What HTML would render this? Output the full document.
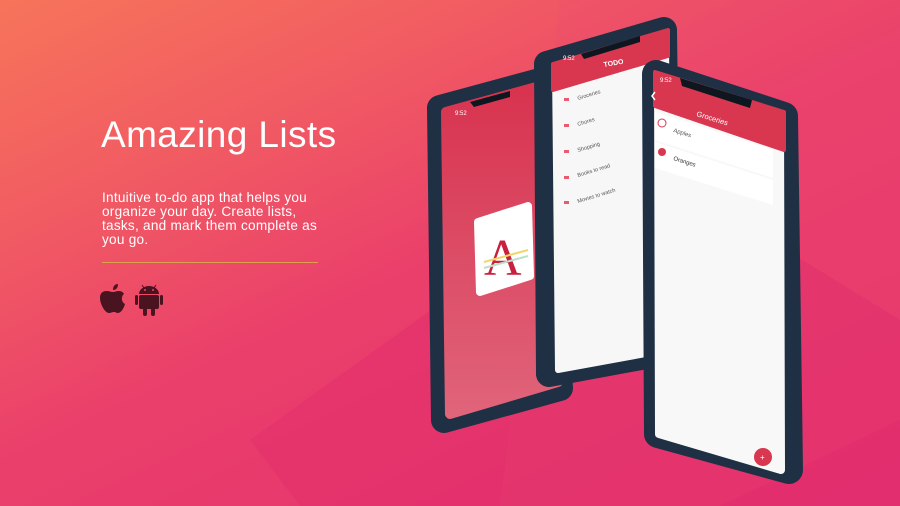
<!DOCTYPE html>
<html><head><meta charset="utf-8"><style>
html,body{margin:0;padding:0}
body{width:900px;height:506px;overflow:hidden;position:relative;font-family:"Liberation Sans",sans-serif;
background:linear-gradient(155deg,#f7745a 0%,#f15c62 25%,#ea3f6b 50%,#e4306f 100%);}
.t{position:absolute;left:101px;top:114px;color:#fff;font-size:37px;letter-spacing:0.4px;}
.p{position:absolute;left:102px;top:191px;width:232px;color:#fff;font-size:13.6px;line-height:14px;letter-spacing:0.25px;}
.hr{position:absolute;left:102px;top:262px;width:216px;height:1px;background:#dfa04e}
</style></head><body>
<svg width="900" height="506" style="position:absolute;left:0;top:0">
<polygon points="560,0 900,0 900,420 720,506 560,506 500,506" fill="#ec4a6f" opacity="0.25"/>
<polygon points="250,440 640,160 900,320 900,506 300,506" fill="#e0276c" opacity="0.35"/>
</svg>
<div class="t">Amazing Lists</div>
<div class="p">Intuitive to-do app that helps you organize your day. Create lists, tasks, and mark them complete as you go.</div>
<div class="hr"></div>
<svg width="64" height="36" style="position:absolute;left:99px;top:282px" viewBox="0 0 64 36">
<path d="M14 10c2 0 3-1 6-1 2 0 4 1 5 3-3 2-3 8 1 10-1 4-4 9-7 9-2 0-2-1-4-1s-3 1-5 1C6 31 1 22 1 16 1 10 5 9 8 9c2 0 4 1 6 1z M14 8c0-4 2-6 5-6 0 4-2 6-5 6z" fill="#4a1320"/>
<g fill="#4a1320"><path d="M40 12a10 8 0 0 1 20 0z"/><rect x="40" y="13" width="20" height="14" rx="2"/><rect x="36" y="13" width="3" height="10" rx="1.5"/><rect x="61" y="13" width="3" height="10" rx="1.5"/><rect x="44" y="26" width="4" height="8" rx="2"/><rect x="52" y="26" width="4" height="8" rx="2"/>
<line x1="43" y1="3" x2="45" y2="6" stroke="#4a1320" stroke-width="1"/><line x1="57" y1="3" x2="55" y2="6" stroke="#4a1320" stroke-width="1"/></g>
<circle cx="46" cy="8" r="1" fill="#e8456c"/><circle cx="54" cy="8" r="1" fill="#e8456c"/>
</svg>
<svg width="900" height="506" style="position:absolute;left:0;top:0">
<defs><linearGradient id="g1" x1="0" y1="0" x2="0" y2="1"><stop offset="0" stop-color="#d8334f"/><stop offset="1" stop-color="#e0647a"/></linearGradient></defs>
<!-- left phone -->
<polygon points="440,108 536,82 560,388 444,420" fill="#1c2c3d" stroke="#1f3044" stroke-width="26" stroke-linejoin="round"/>
<polygon points="446,112 540,86 558,382 450,414" fill="url(#g1)" stroke="url(#g1)" stroke-width="10" stroke-linejoin="round"/>
<polygon points="470,102 510,91 510,97 474,107" fill="#0e1620"/>
<polygon points="478,222 528,206 530,276 480,292" fill="#fff" stroke="#fff" stroke-width="8" stroke-linejoin="round"/>
<text x="484" y="275" font-family="Liberation Serif,serif" font-size="52" fill="#c8203e">A</text>
<line x1="484" y1="262" x2="528" y2="250" stroke="#f2d66a" stroke-width="2"/>
<line x1="484" y1="268" x2="528" y2="256" stroke="#bde0c8" stroke-width="2"/>
<text x="455" y="115" font-size="6" fill="#fff">9:52</text>
<!-- middle phone -->
<polygon points="547,64 664,30 668,352 549,374" fill="#1c2c3d" stroke="#1f3044" stroke-width="26" stroke-linejoin="round"/>
<polygon points="555,66 666,34 668,350 558,370" fill="#f7f7f7" stroke="#f7f7f7" stroke-width="6" stroke-linejoin="round"/>
<polygon points="553,64 668,30 668,56 553,90" fill="#d9364f" stroke="#d9364f" stroke-width="4" stroke-linejoin="round"/>
<polygon points="581,54 640,36 640,42 584,59" fill="#0e1620"/>
<text x="563" y="60" font-size="6" fill="#fff">9:52</text>
<text x="604" y="67" font-size="7" fill="#fff" font-weight="bold" transform="rotate(-10 604 67)">TODO</text>
<g font-size="5.5" fill="#555">
<text x="578" y="100" transform="rotate(-17 578 100)">Groceries</text>
<text x="578" y="126" transform="rotate(-17 578 126)">Chores</text>
<text x="578" y="152" transform="rotate(-17 578 152)">Shopping</text>
<text x="578" y="177" transform="rotate(-17 578 177)">Books to read</text>
<text x="578" y="203" transform="rotate(-17 578 203)">Movies to watch</text></g>
<g fill="#e85a70"><rect x="564" y="98" width="5" height="3"/><rect x="564" y="124" width="5" height="3"/><rect x="564" y="150" width="5" height="3"/><rect x="564" y="176" width="5" height="3"/><rect x="564" y="201" width="5" height="3"/></g>
<!-- right phone -->
<polygon points="656,74 784,116 789,470 658,434" fill="#1c2c3d" stroke="#1f3044" stroke-width="28" stroke-linejoin="round"/>
<polygon points="658,76 780,116 781,470 659,434" fill="#f8f8f8" stroke="#f8f8f8" stroke-width="8" stroke-linejoin="round"/>
<polygon points="655,72 784,112 784,150 655,106" fill="#d9364f" stroke="#d9364f" stroke-width="4" stroke-linejoin="round"/>
<polygon points="680,78 752,100 750,108 682,86" fill="#0e1620"/>
<polygon points="655,112 773,150 773,178 655,140" fill="#fff"/>
<polygon points="655,142 773,180 773,205 655,168" fill="#fff"/>
<text x="660" y="82" font-size="6" fill="#fff">9:52</text>
<text x="696" y="116" font-size="7.5" fill="#fff" transform="rotate(17 696 116)">Groceries</text>
<path d="M655 92l-3 4 3 4" stroke="#fff" fill="none" stroke-width="1.5"/>
<circle cx="662" cy="123" r="4" fill="none" stroke="#d9364f" stroke-width="1"/>
<circle cx="662" cy="152" r="4" fill="#d9364f"/>
<text x="673" y="132" font-size="6" fill="#555" transform="rotate(17 673 132)">Apples</text>
<text x="673" y="160" font-size="6" fill="#333" transform="rotate(17 673 160)">Oranges</text>
<circle cx="763" cy="457" r="9" fill="#d9364f"/>
<text x="760" y="460" font-size="8" fill="#fff">+</text>
</svg>
</body></html>
